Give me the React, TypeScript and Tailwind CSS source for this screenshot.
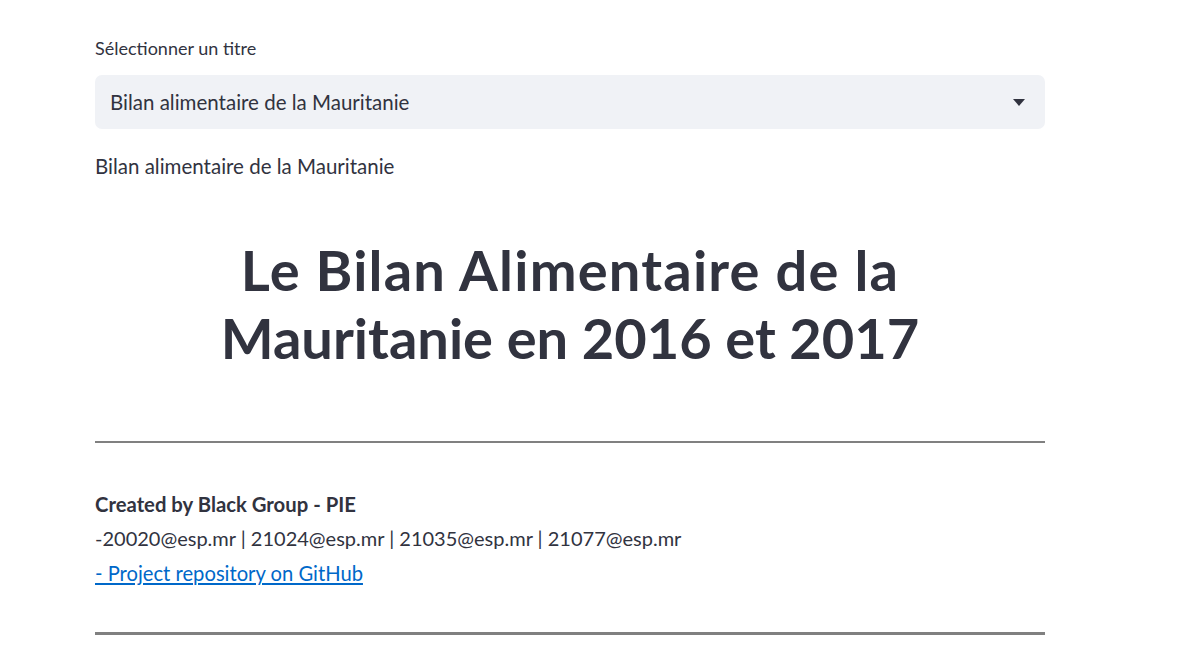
import React from "react";

export default function App() {
  return (
    <div className="w-[1177px] h-[652px] bg-white overflow-hidden text-[#31333f]" style={{ fontFamily: "Lato, 'Noto Sans', sans-serif" }}>
      <div className="ml-[95px] w-[950px] flex flex-col">
        <div className="mt-[36px] h-[24px] flex items-center text-[18px]">Sélectionner un titre</div>
        <div className="mt-[15px] h-[54px] rounded-[7px] bg-[#f0f2f6] flex items-center justify-between pl-[15px] pr-[20px]">
          <span className="text-[20.5px]">Bilan alimentaire de la Mauritanie</span>
          <svg width="12" height="7" viewBox="0 0 12 7"><path d="M0 0 L12 0 L6 7 Z" fill="#31333f" /></svg>
        </div>
        <div className="mt-[24px] h-[26px] flex items-center text-[20.5px]">Bilan alimentaire de la Mauritanie</div>
        <h1 className="mt-[57px] text-center font-bold text-[56px] leading-[68px] flex flex-col">
          <span className="tracking-[1.2px]">Le Bilan Alimentaire de la</span>
          <span className="tracking-[0px]">Mauritanie en 2016 et 2017</span>
        </h1>
        <div className="mt-[69px] h-[2px] bg-[#808080]" />
        <div className="mt-[48px] h-[26px] flex items-center text-[20.3px] font-bold">Created by Black Group - PIE</div>
        <div className="mt-[8px] h-[26px] flex items-center text-[20px]">-20020@esp.mr | 21024@esp.mr | 21035@esp.mr | 21077@esp.mr</div>
        <div className="mt-[9px] h-[26px] flex items-center text-[20.2px]">
          <a className="text-[#0068c9] underline">- Project repository on GitHub</a>
        </div>
        <div className="mt-[46px] h-[3px] bg-[#808080]" />
      </div>
    </div>
  );
}
